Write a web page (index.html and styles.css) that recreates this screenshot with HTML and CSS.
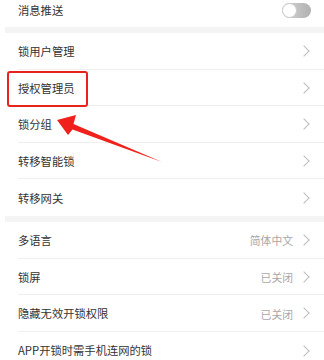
FILE: index.html
```html
<!DOCTYPE html>
<html lang="zh">
<head>
<meta charset="utf-8">
<link rel="stylesheet" href="styles.css">
</head>
<body>
<div class="page">
  <div class="row row-first">
    <span class="label">消息推送</span>
    <span class="toggle"><span class="knob"></span></span>
  </div>
  <div class="band"></div>
  <div class="section">
    <div class="row"><span class="label">锁用户管理</span><span class="chev"></span></div>
    <div class="row"><span class="label">授权管理员</span><span class="chev"></span></div>
    <div class="row"><span class="label">锁分组</span><span class="chev"></span></div>
    <div class="row"><span class="label">转移智能锁</span><span class="chev"></span></div>
    <div class="row last"><span class="label">转移网关</span><span class="chev"></span></div>
  </div>
  <div class="band"></div>
  <div class="section">
    <div class="row"><span class="label">多语言</span><span class="value">简体中文</span><span class="chev"></span></div>
    <div class="row"><span class="label">锁屏</span><span class="value">已关闭</span><span class="chev"></span></div>
    <div class="row"><span class="label">隐藏无效开锁权限</span><span class="value">已关闭</span><span class="chev"></span></div>
    <div class="row last"><span class="label">APP开锁时需手机连网的锁</span><span class="chev"></span></div>
  </div>

  <div class="highlight"></div>
  <svg class="arrow" width="324" height="360" viewBox="0 0 324 360">
    <polygon points="57,120 76,115 73.5,124 162,162 72.5,129.5 68,135" fill="#f0211c"/>
  </svg>
</div>
</body>
</html>
```

FILE: styles.css
```css
html, body {
  margin: 0;
  padding: 0;
  background: #fff;
}
body {
  font-family: "Noto Sans CJK SC", "Noto Sans", sans-serif;
  overflow: hidden;
}
.page {
  position: relative;
  width: 324px;
  height: 360px;
  padding-left: 5px;
  box-sizing: border-box;
  overflow: hidden;
}
.band {
  height: 6px;
  background: #f4f4f4;
}
.row {
  display: flex;
  align-items: center;
  height: 36.6px;
  margin-left: 13px;
  padding-right: 13px;
  padding-top: 2px;
  box-sizing: border-box;
  border-bottom: 1px solid #efefef;
}
.row.last {
  border-bottom: none;
}
.row-first {
  height: 35px;
  margin-top: -8px;
  border-bottom: none;
}
.label {
  flex: 1;
  font-size: 11.3px;
  color: #333;
  line-height: 1;
}
.value {
  font-size: 10.8px;
  color: #a8a8a8;
  margin-right: 7px;
  line-height: 1;
}
.chev {
  width: 7px;
  height: 7px;
  border-top: 1px solid #bdbdbd;
  border-right: 1px solid #bdbdbd;
  transform: rotate(45deg);
  margin-right: 3px;
  margin-top: -1px;
}
.toggle {
  position: relative;
  width: 29px;
  height: 15px;
  border-radius: 8px;
  background: linear-gradient(90deg, #d8d8d8, #b0b0b0);
  margin-top: -1px;
}
.knob {
  position: absolute;
  left: 0;
  top: 0;
  width: 15px;
  height: 15px;
  border-radius: 50%;
  background: #fff;
  box-sizing: border-box;
  border: 1px solid #c8c8c8;
}
.highlight {
  position: absolute;
  left: 7px;
  top: 71px;
  width: 81px;
  height: 36px;
  box-sizing: border-box;
  border: 2.5px solid #e8221d;
  border-radius: 3px;
}
.arrow {
  position: absolute;
  left: 0;
  top: 0;
}
```
